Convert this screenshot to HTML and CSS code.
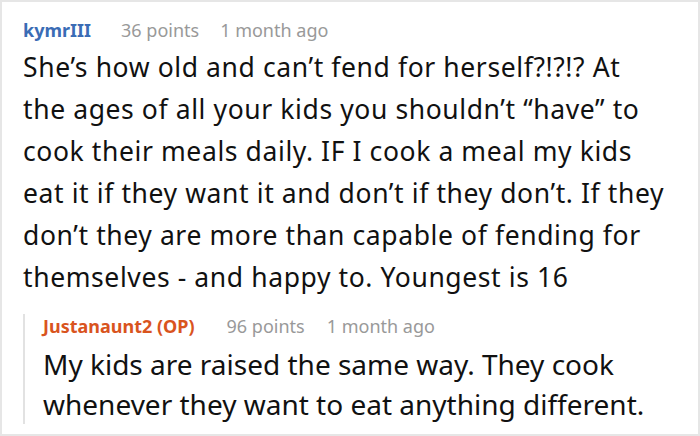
FILE: index.html
```html
<!DOCTYPE html>
<html>
<head>
<meta charset="utf-8">
<link rel="stylesheet" href="styles.css">
</head>
<body>
<div class="card">
  <div class="meta">
    <span class="user">kymrIII</span>
    <span class="info">36 points</span>
    <span class="info">1 month ago</span>
  </div>
  <p class="text main">She’s how old and can’t fend for herself?!?!? At<br>the ages of all your kids you shouldn’t “have” to<br>cook their meals daily. IF I cook a meal my kids<br>eat it if they want it and don’t if they don’t. If they<br>don’t they are more than capable of fending for<br>themselves - and happy to. Youngest is 16</p>
  <div class="reply">
    <div class="meta reply-meta">
      <span class="user op">Justanaunt2 (OP)</span>
      <span class="info">96 points</span>
      <span class="info">1 month ago</span>
    </div>
    <p class="text reply-text">My kids are raised the same way. They cook<br>whenever they want to eat anything different.</p>
  </div>
</div>
</body>
</html>
```
FILE: styles.css
```css
html, body { margin: 0; padding: 0; background: #fff; }
.card {
  width: 700px;
  height: 436px;
  box-sizing: border-box;
  border: 2px solid #e6e6e6;
  padding: 16px 0 0 21px;
  font-family: "Noto Sans", "Open Sans", sans-serif;
  overflow: hidden;
}
.meta {
  display: flex;
  gap: 21px;
  font-size: 18px;
  line-height: 24px;
  margin: 0 0 4px 0;
}
.user { font-weight: 700; color: #3a6cb5; margin-right: 9px; }
.user.op { color: #d9541e; margin-right: 10px; }
.info { color: #999; }
.reply-meta { gap: 22px; }
.text { margin: 0; color: #111; }
.main {
  font-size: 26.5px;
  line-height: 42px;
  font-stretch: semi-condensed;
  letter-spacing: 0.6px;
}
.reply {
  border-left: 2px solid #e2e2e2;
  margin: 27px 0 0 0;
  padding-left: 18px;
  white-space: nowrap;
}
.reply-meta { margin-top: -11px; margin-bottom: 6px; }
.reply-text {
  font-size: 28px;
  line-height: 40px;
  margin-bottom: -6px;
}
```
